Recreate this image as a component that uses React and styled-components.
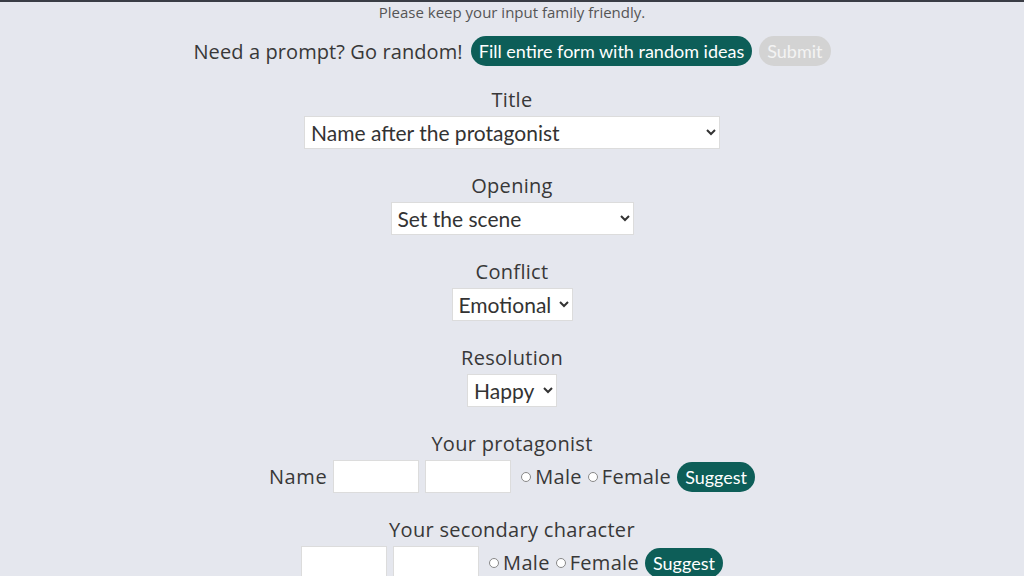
import React from 'react';
import styled, { createGlobalStyle } from 'styled-components';

const GlobalStyle = createGlobalStyle`
  html, body {
    margin: 0;
    padding: 0;
    background: #e5e7ee;
  }
  body {
    border-top: 2px solid #3a3d45;
    font-family: 'Lato', 'Liberation Sans', sans-serif;
    color: #333;
    overflow: hidden;
  }
`;

const Page = styled.div`
  display: flex;
  flex-direction: column;
  align-items: center;
  height: 574px;
`;

const Notice = styled.p`
  margin: 0;
  height: 20px;
  line-height: 20px;
  font-family: 'Open Sans', sans-serif;
  font-size: 15px;
  color: #555;
`;

const RandomRow = styled.div`
  display: flex;
  align-items: center;
  gap: 7px;
  margin-top: 14px;
`;

const Label = styled.span`
  font-family: 'Open Sans', sans-serif;
  font-size: 20px;
  letter-spacing: ${(p) => p.$ls ?? 0.3}px;
  color: #383838;
  margin-right: ${(p) => p.$gap || 0}px;
`;

const PillButton = styled.button`
  height: 30px;
  padding: 0 8px;
  border: none;
  border-radius: 15px;
  background: ${(p) => (p.$muted ? '#d3d3d3' : '#0d5e58')};
  color: ${(p) => (p.$muted ? '#f3f3f3' : '#fff')};
  font-family: 'Lato', sans-serif;
  font-size: 18px;
  white-space: nowrap;
  cursor: pointer;
`;

const Field = styled.div`
  display: flex;
  flex-direction: column;
  align-items: center;
  margin-top: ${(p) => (p.$first ? '22px' : '25px')};
`;

const FieldTitle = styled.div`
  font-family: 'Open Sans', sans-serif;
  font-size: 20px;
  letter-spacing: 0.3px;
  color: #383838;
  height: 24px;
  line-height: 24px;
  margin-bottom: 4px;
`;

const Select = styled.select`
  height: 33px;
  width: ${(p) => p.$w}px;
  border: 1px solid #dcdcdc;
  border-radius: 0;
  background: #fff;
  color: #333;
  font-family: 'Lato', sans-serif;
  font-size: 21px;
  padding: 0 2px;
`;

const CharRow = styled.div`
  display: flex;
  align-items: center;
  gap: 6px;
`;

const TextBox = styled.input`
  width: 86px;
  height: 33px;
  box-sizing: border-box;
  border: 1px solid #dcdcdc;
  background: #fff;
  font-size: 18px;
  margin: 0;
`;

const RadioLabel = styled.label`
  display: flex;
  align-items: center;
  gap: 4px;
  font-family: 'Open Sans', sans-serif;
  font-size: 20px;
  letter-spacing: 0.3px;
  color: #383838;
  margin-left: ${(p) => (p.$first ? '4px' : '0')};
`;

const Radio = styled.input`
  appearance: none;
  width: 10px;
  height: 10px;
  margin: 1px 0 0 0;
  border: 1px solid #888;
  border-radius: 50%;
  background: #fff;
`;

const Character = ({ title, withName }) => (
  <Field>
    <FieldTitle>{title}</FieldTitle>
    <CharRow>
      {withName && <Label $ls={0.6}>Name</Label>}
      <TextBox type="text" />
      <TextBox type="text" />
      <RadioLabel $first>
        <Radio type="radio" name={title} />
        Male
      </RadioLabel>
      <RadioLabel>
        <Radio type="radio" name={title} />
        Female
      </RadioLabel>
      <PillButton>Suggest</PillButton>
    </CharRow>
  </Field>
);

export default function App() {
  return (
    <>
      <GlobalStyle />
      <Page>
        <Notice>Please keep your input family friendly.</Notice>
        <RandomRow>
          <Label $gap={1} $ls={0.1}>Need a prompt? Go random!</Label>
          <PillButton>Fill entire form with random ideas</PillButton>
          <PillButton $muted>Submit</PillButton>
        </RandomRow>

        <Field $first>
          <FieldTitle>Title</FieldTitle>
          <Select $w={416} defaultValue="a">
            <option value="a">Name after the protagonist</option>
          </Select>
        </Field>

        <Field>
          <FieldTitle>Opening</FieldTitle>
          <Select $w={243} defaultValue="a">
            <option value="a">Set the scene</option>
          </Select>
        </Field>

        <Field>
          <FieldTitle>Conflict</FieldTitle>
          <Select $w={121} defaultValue="a">
            <option value="a">Emotional</option>
          </Select>
        </Field>

        <Field>
          <FieldTitle>Resolution</FieldTitle>
          <Select $w={90} defaultValue="a">
            <option value="a">Happy</option>
          </Select>
        </Field>

        <Character title="Your protagonist" withName />
        <Character title="Your secondary character" />
      </Page>
    </>
  );
}
